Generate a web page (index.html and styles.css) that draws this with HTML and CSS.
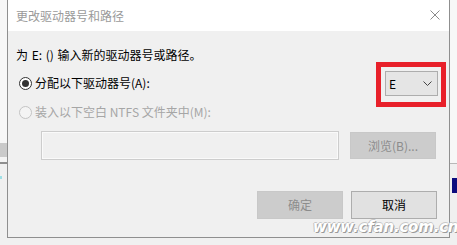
FILE: index.html
```html
<!DOCTYPE html>
<html lang="zh-CN">
<head>
<meta charset="utf-8">
<title>更改驱动器号和路径</title>
<link rel="stylesheet" href="styles.css">
</head>
<body>
<div class="screen">
  <div class="strip strip-left">
    <div class="sl-top"></div>
    <div class="sl-band"></div>
    <div class="sl-gap"></div>
    <div class="sl-line"></div>
    <div class="sl-rest"><span class="sl-dot"></span></div>
  </div>
  <div class="main">
    <div class="dialog">
      <div class="titlebar">
        <span class="title">更改驱动器号和路径</span>
        <svg class="close" width="10" height="10" viewBox="0 0 10 10"><path d="M0.5 0.5 L9.5 9.5 M9.5 0.5 L0.5 9.5" stroke="#8a8a8a" stroke-width="1" fill="none"/></svg>
      </div>
      <div class="content">
        <div class="prompt">为 E: () 输入新的驱动器号或路径。</div>
        <div class="row row-assign">
          <label class="opt">
            <span class="radio checked"><span class="dot"></span></span>
            <span>分配以下驱动器号(A):</span>
          </label>
          <div class="highlight">
            <div class="combo">
              <span class="combo-val">E</span>
              <svg width="9" height="5" viewBox="0 0 9 5"><path d="M0.5 0.5 L4.5 4.5 L8.5 0.5" stroke="#444" stroke-width="1" fill="none"/></svg>
            </div>
          </div>
        </div>
        <label class="opt opt-disabled">
          <span class="radio"></span>
          <span>装入以下空白 NTFS 文件夹中(M):</span>
        </label>
        <div class="row row-path">
          <div class="textbox"></div>
          <div class="btn btn-disabled btn-browse">浏览(B)...</div>
        </div>
        <div class="row row-actions">
          <div class="btn btn-disabled">确定</div>
          <div class="btn btn-normal">取消</div>
        </div>
      </div>
    </div>
    <div class="under"></div>
  </div>
  <div class="strip strip-right">
    <div class="sr-top"></div>
    <div class="sr-line"></div>
    <div class="sr-gap"></div>
    <div class="sr-blue"></div>
    <div class="sr-rest"></div>
  </div>
</div>
<div class="watermark">www.cfan.com.cn</div>
</body>
</html>
```

FILE: styles.css
```css
html, body {
  margin: 0;
  padding: 0;
}
body {
  width: 457px;
  height: 245px;
  overflow: hidden;
  position: relative;
  background: #f0f0f0;
  font-family: "Noto Sans CJK SC", "Noto Sans", sans-serif;
  font-size: 12px;
  color: #000;
}
.screen {
  display: flex;
  width: 457px;
  height: 245px;
}
.strip {
  display: flex;
  flex-direction: column;
}
.strip-left {
  width: 7px;
}
.sl-top { height: 143px; background: #f7f7f7; }
.sl-band { height: 14px; background: #cacaca; }
.sl-gap { height: 5px; background: #f4f4f4; }
.sl-line { height: 2px; background: #8e8e8e; }
.sl-rest { flex: 1; background: #f0f0f0; position: relative; }
.sl-dot {
  position: absolute;
  left: 0;
  top: 12px;
  width: 2px;
  height: 3px;
  background: #9fe0e6;
}
.main {
  width: 443px;
  display: flex;
  flex-direction: column;
}
.dialog {
  height: 237px;
  border-left: 1px solid #8f8f8f;
  border-right: 1px solid #8f8f8f;
  border-bottom: 1px solid #8f8f8f;
  background: #f0f0f0;
  display: flex;
  flex-direction: column;
}
.under {
  flex: 1;
  background: #f0f0f0;
}
.titlebar {
  height: 31px;
  background: #fff;
  display: flex;
  align-items: center;
  justify-content: space-between;
  padding: 0 9px 0 8px;
}
.title {
  color: #9a9a9a;
  line-height: 16px;
}
.close {
  display: block;
  margin-top: -1px;
}
.content {
  flex: 1;
  display: flex;
  flex-direction: column;
  padding: 17px 12px 0 8px;
}
.prompt {
  line-height: 14px;
  word-spacing: 1px;
}
.row {
  display: flex;
}
.row-assign {
  height: 45px;
  justify-content: space-between;
  align-items: flex-start;
}
.opt {
  display: flex;
  align-items: center;
  gap: 3px;
  line-height: 16px;
  margin-left: 3px;
}
.row-assign .opt {
  margin-top: 13px;
}
.radio {
  width: 11px;
  height: 11px;
  border: 1px solid #333;
  border-radius: 50%;
  background: #fff;
  display: flex;
  align-items: center;
  justify-content: center;
}
.dot {
  width: 7px;
  height: 7px;
  border-radius: 50%;
  background: #333;
}
.opt-disabled {
  color: #a6a6a6;
  margin-top: -3px;
}
.opt-disabled .radio {
  border-color: #c4c4c4;
  background: #f4f4f4;
}
.highlight {
  border: 5px solid #e8202a;
  padding: 4px 3px 6px 4px;
  margin-right: -9px;
}
.combo {
  width: 43px;
  height: 23px;
  border: 1px solid #adadad;
  background: #e5e5e5;
  display: flex;
  align-items: center;
  justify-content: space-between;
  padding: 0 5px 0 3px;
}
.combo-val {
  line-height: 16px;
}
.combo svg {
  display: block;
}
.row-path {
  margin-top: 11px;
  align-items: center;
  gap: 11px;
  padding-left: 25px;
}
.textbox {
  width: 296px;
  height: 27px;
  border: 1px solid #cdcdcd;
  box-shadow: inset 0 0 0 1px #fafafa;
  background: #f0f0f0;
}
.btn {
  width: 84px;
  height: 26px;
  border: 1px solid #c4c4c4;
  display: flex;
  align-items: center;
  justify-content: center;
  line-height: 16px;
}
.btn-browse {
  height: 25px;
}
.btn-disabled {
  background: #cccccc;
  border-color: #c8c8c8;
  color: #8c8c8c;
}
.btn-normal {
  background: #e1e1e1;
  border-color: #adadad;
  color: #000;
}
.row-actions {
  margin-top: 31px;
  justify-content: flex-end;
  gap: 8px;
}
.strip-right {
  width: 7px;
}
.sr-top { height: 163px; background: #f7f7f7; }
.sr-line { height: 1px; background: #b8b8b8; }
.sr-gap { height: 14px; background: #f0f0f0; }
.sr-blue { height: 15px; background: #0c0c7e; margin-left: 2px; }
.sr-rest { flex: 1; background: #f0f0f0; }
.watermark {
  position: absolute;
  left: 313px;
  top: 218px;
  font-family: "DejaVu Sans", sans-serif;
  font-weight: bold;
  font-style: italic;
  font-size: 15px;
  line-height: 18px;
  color: #fff;
  letter-spacing: -0.2px;
  text-shadow: 1px 1px 0 #9a9a9a, -1px 0 0 #c0c0c0, 0 -1px 0 #c8c8c8;
  white-space: nowrap;
}
```
